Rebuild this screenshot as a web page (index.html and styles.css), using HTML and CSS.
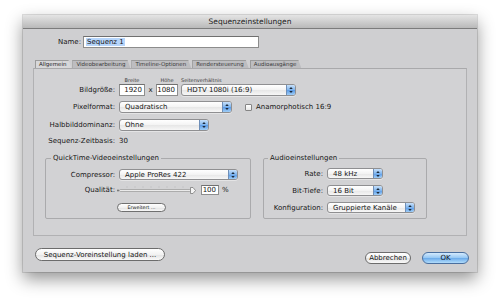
FILE: index.html
```html
<!DOCTYPE html>
<html>
<head>
<meta charset="utf-8">
<title>Sequenzeinstellungen</title>
<link rel="stylesheet" href="styles.css">
</head>
<body>
<div class="window">
  <div class="titlebar">Sequenzeinstellungen</div>

  <div class="name-row">
    <span class="name-label">Name:</span>
    <div class="name-input"><span class="selected">Sequenz 1</span></div>
  </div>

  <div class="tabs">
    <span class="tab active">Allgemein</span>
    <span class="tab">Videobearbeitung</span>
    <span class="tab">Timeline-Optionen</span>
    <span class="tab">Rendersteuerung</span>
    <span class="tab">Audioausgänge</span>
  </div>

  <div class="panel">
    <div class="size-row">
      <span class="label lh12">Bildgröße:</span>
      <div class="stack">
        <span class="mini">Breite</span>
        <span class="field w-width">1920</span>
      </div>
      <span class="times">x</span>
      <div class="stack">
        <span class="mini">Höhe</span>
        <span class="field w-height">1080</span>
      </div>
      <div class="stack stack-left">
        <span class="mini">Seitenverhältnis</span>
        <div class="popup w-aspect h12"><span class="popup-text">HDTV 1080i (16:9)</span><span class="stepper"><svg viewBox="0 0 9 10" width="9" height="10"><polygon points="2.5,4 6.5,4 4.5,1.5" fill="#1d2a3a"/><polygon points="2.5,6 6.5,6 4.5,8.5" fill="#1d2a3a"/></svg></span></div>
      </div>
    </div>

    <div class="row mt5 h12">
      <span class="label">Pixelformat:</span>
      <div class="popup w-pixel h12"><span class="popup-text">Quadratisch</span><span class="stepper"><svg viewBox="0 0 9 10" width="9" height="10"><polygon points="2.5,4 6.5,4 4.5,1.5" fill="#1d2a3a"/><polygon points="2.5,6 6.5,6 4.5,8.5" fill="#1d2a3a"/></svg></span></div>
      <span class="checkbox"></span>
      <span class="check-label">Anamorphotisch 16:9</span>
    </div>

    <div class="row mt6 h12">
      <span class="label">Halbbilddominanz:</span>
      <div class="popup w-field h12"><span class="popup-text">Ohne</span><span class="stepper"><svg viewBox="0 0 9 10" width="9" height="10"><polygon points="2.5,4 6.5,4 4.5,1.5" fill="#1d2a3a"/><polygon points="2.5,6 6.5,6 4.5,8.5" fill="#1d2a3a"/></svg></span></div>
    </div>

    <div class="row mt5 h10">
      <span class="label">Sequenz-Zeitbasis:</span>
      <span>30</span>
    </div>

    <div class="groups">
      <fieldset class="group group-video">
        <legend>QuickTime-Videoeinstellungen</legend>
        <div class="row grow mt7 h11">
          <span class="glabel-v">Compressor:</span>
          <div class="popup w-comp h11"><span class="popup-text">Apple ProRes 422</span><span class="stepper"><svg viewBox="0 0 9 10" width="9" height="10"><polygon points="2.5,4 6.5,4 4.5,1.5" fill="#1d2a3a"/><polygon points="2.5,6 6.5,6 4.5,8.5" fill="#1d2a3a"/></svg></span></div>
        </div>
        <div class="row mt5 h10">
          <span class="glabel-v">Qualität:</span>
          <svg class="slider" viewBox="0 0 82 10" width="82" height="10">
            <g stroke="#c4c4c6" stroke-width="1">
              <line x1="12" y1="1" x2="12" y2="3"/><line x1="20" y1="1" x2="20" y2="3"/><line x1="28" y1="1" x2="28" y2="3"/>
              <line x1="36" y1="1" x2="36" y2="3"/><line x1="44" y1="1" x2="44" y2="3"/><line x1="52" y1="1" x2="52" y2="3"/>
              <line x1="60" y1="1" x2="60" y2="3"/><line x1="68" y1="1" x2="68" y2="3"/>
            </g>
            <circle cx="3" cy="5.5" r="0.9" fill="#666"/>
            <rect x="4.5" y="4.5" width="71" height="2" rx="1" fill="#eaeaea" stroke="#8a8a8a" stroke-width="0.6"/>
            <path d="M75.5 2.5 h2.5 l2.5 3 l-2.5 3 h-2.5 z" fill="#f4f4f4" stroke="#6e6e6e" stroke-width="0.7"/>
          </svg>
          <span class="field pct">100</span>
          <span class="pct-sign">%</span>
        </div>
        <div class="row mt8">
          <span class="small-btn">Erweitert ...</span>
        </div>
      </fieldset>

      <fieldset class="group group-audio">
        <legend>Audioeinstellungen</legend>
        <div class="row mt6 h11">
          <span class="glabel-a">Rate:</span>
          <div class="popup w-rate h11"><span class="popup-text">48 kHz</span><span class="stepper"><svg viewBox="0 0 9 10" width="9" height="10"><polygon points="2.5,4 6.5,4 4.5,1.5" fill="#1d2a3a"/><polygon points="2.5,6 6.5,6 4.5,8.5" fill="#1d2a3a"/></svg></span></div>
        </div>
        <div class="row mt6 h11">
          <span class="glabel-a">Bit-Tiefe:</span>
          <div class="popup w-rate h11"><span class="popup-text">16 Bit</span><span class="stepper"><svg viewBox="0 0 9 10" width="9" height="10"><polygon points="2.5,4 6.5,4 4.5,1.5" fill="#1d2a3a"/><polygon points="2.5,6 6.5,6 4.5,8.5" fill="#1d2a3a"/></svg></span></div>
        </div>
        <div class="row mt6 h11">
          <span class="glabel-a">Konfiguration:</span>
          <div class="popup w-conf h11"><span class="popup-text">Gruppierte Kanäle</span><span class="stepper"><svg viewBox="0 0 9 10" width="9" height="10"><polygon points="2.5,4 6.5,4 4.5,1.5" fill="#1d2a3a"/><polygon points="2.5,6 6.5,6 4.5,8.5" fill="#1d2a3a"/></svg></span></div>
        </div>
      </fieldset>
    </div>
  </div>

  <div class="footer">
    <span class="btn btn-load">Sequenz-Voreinstellung laden ...</span>
    <div class="footer-right">
      <span class="btn btn-cancel">Abbrechen</span>
      <span class="btn btn-ok">OK</span>
    </div>
  </div>
</div>
</body>
</html>
```

FILE: styles.css
```css
* { box-sizing: border-box; }

body {
  margin: 0;
  background: #ffffff;
  font-family: "DejaVu Sans", "Liberation Sans", sans-serif;
  font-size: 7px;
  color: #161616;
  height: 304px;
  overflow: hidden;
}

.window {
  margin: 15px 0 0 23px;
  width: 454px;
  height: 257px;
  background: #cfcfd1;
  box-shadow: 0 7px 16px rgba(0, 0, 0, 0.42), 0 0 0 1px rgba(0, 0, 0, 0.12);
  display: flex;
  flex-direction: column;
}

.titlebar {
  height: 14px;
  line-height: 13px;
  text-align: center;
  font-size: 7.5px;
  color: #1c1c1c;
  background: linear-gradient(#e4e4e4, #cdcdcd 55%, #b9b9b9);
  border-bottom: 1px solid #7c7c7c;
}

.name-row {
  display: flex;
  align-items: center;
  margin: 7px 0 0 35px;
  height: 12px;
}

.name-label {
  width: 25px;
}

.name-input {
  width: 176px;
  height: 12px;
  background: #ffffff;
  border: 1px solid #8c8c8c;
  border-top-color: #6f6f6f;
  padding-left: 2px;
  line-height: 10px;
}

.selected {
  background: #b6d5fb;
  padding: 0 1px;
}

.tabs {
  display: flex;
  margin: 12px 0 0 12px;
  height: 8px;
}

.tab {
  font-size: 5.5px;
  line-height: 7px;
  height: 8px;
  padding: 0 5px 0 3px;
  margin-right: 1px;
  background: #bdbdc0;
  color: #3a3a3a;
  border-top: 1px solid #9b9b9b;
  border-left: 1px solid #9b9b9b;
  clip-path: polygon(0 0, calc(100% - 3px) 0, 100% 100%, 0 100%);
}

.tab.active {
  background: #d7d7d9;
  color: #222;
}

.panel {
  margin: 0 10px;
  height: 168px;
  border: 1px solid #b1b1b3;
  border-top-color: #a9a9ab;
  background: #d2d2d4;
  padding-top: 7px;
}

.row {
  display: flex;
  align-items: center;
}

.mt5 { margin-top: 5px; }
.mt6 { margin-top: 6px; }
.mt7 { margin-top: 7px; }
.mt8 { margin-top: 8px; }
.h10 { height: 10px; }
.h11 { height: 11px; }
.h12 { height: 12px; }
.lh12 { line-height: 12px; }

.label {
  width: 81px;
  margin-right: 4px;
  text-align: right;
}

.size-row {
  display: flex;
  align-items: flex-end;
  height: 20px;
}

.stack {
  display: flex;
  flex-direction: column;
  align-items: center;
}

.stack-left {
  align-items: flex-start;
  margin-left: 3px;
}

.mini {
  font-size: 5px;
  line-height: 8px;
  color: #3c3c3c;
}

.field {
  height: 12px;
  line-height: 10px;
  background: #ffffff;
  border: 1px solid #8e8e8e;
  border-top-color: #707070;
  text-align: right;
  padding-right: 2px;
  font-size: 7px;
}

.w-width { width: 26px; }
.w-height { width: 22px; }

.times {
  width: 11px;
  text-align: center;
  line-height: 12px;
}

.popup {
  display: flex;
  align-items: stretch;
  border: 1px solid #8f8f91;
  border-radius: 3px;
  background: linear-gradient(#ffffff, #f3f3f3 50%, #e6e6e6 51%, #f7f7f7);
  box-shadow: 0 1px 0 rgba(255, 255, 255, 0.4);
  overflow: hidden;
}

.popup-text {
  flex: 1;
  padding-left: 5px;
  white-space: nowrap;
  display: flex;
  align-items: center;
}

.stepper {
  width: 9px;
  display: flex;
  align-items: center;
  justify-content: center;
  background: linear-gradient(#c7e0fa, #7fb5ee 50%, #5a9ae6 51%, #9fcdf6);
  border-left: 1px solid #6f8fb8;
}

.w-aspect { width: 115px; }
.w-pixel { width: 113px; }
.w-field { width: 90px; }
.w-comp { width: 119px; }
.w-rate { width: 56px; }
.w-conf { width: 88px; }

.checkbox {
  width: 7px;
  height: 7px;
  margin-left: 13px;
  border: 1px solid #858585;
  border-radius: 1px;
  background: linear-gradient(#ffffff, #e8e8e8);
}

.check-label {
  margin-left: 4px;
}

.groups {
  display: flex;
  margin: 8px 0 0 11px;
  gap: 12px;
}

.group {
  margin: 0;
  padding: 0;
  border: 1px solid #aaaaac;
  border-radius: 2px;
  height: 65px;
  min-width: 0;
}

.group legend {
  margin-left: 5px;
  padding: 0 2px;
  line-height: 8px;
  font-size: 7px;
}

.group-video { width: 206px; }
.group-audio { width: 164px; }
.group-audio legend { margin-left: 4px; }

.glabel-v {
  width: 69px;
  margin-right: 4px;
  text-align: right;
}

.glabel-a {
  width: 59px;
  margin-right: 4px;
  text-align: right;
}

.slider {
  margin-left: -4px;
}

.pct {
  width: 18px;
  height: 10px;
  line-height: 8px;
  margin-left: 4px;
}

.pct-sign {
  margin-left: 3px;
}

.small-btn {
  margin-left: 71px;
  width: 49px;
  height: 9px;
  line-height: 7px;
  font-size: 4.8px;
  text-align: center;
  border: 1px solid #707070;
  border-radius: 5px;
  background: linear-gradient(#ffffff, #f1f1f1 50%, #e2e2e2 51%, #f8f8f8);
}

.footer {
  display: flex;
  justify-content: space-between;
  align-items: flex-start;
  margin-top: 12px;
  padding: 0 8px 0 12px;
}

.footer-right {
  display: flex;
  gap: 11px;
  margin-top: 4px;
}

.btn {
  display: flex;
  align-items: center;
  justify-content: center;
  font-size: 7px;
  border: 1px solid #6c6c6c;
  border-radius: 7px;
  background: linear-gradient(#ffffff, #f2f2f2 50%, #e2e2e2 51%, #f9f9f9);
}

.btn-load {
  width: 130px;
  height: 13px;
}

.btn-cancel {
  width: 46px;
  height: 12px;
}

.btn-ok {
  width: 47px;
  height: 12px;
  border-color: #4a6f9f;
  background: linear-gradient(#d4eafd, #93c6f3 50%, #6aaaea 51%, #b1dcfb);
}
```
